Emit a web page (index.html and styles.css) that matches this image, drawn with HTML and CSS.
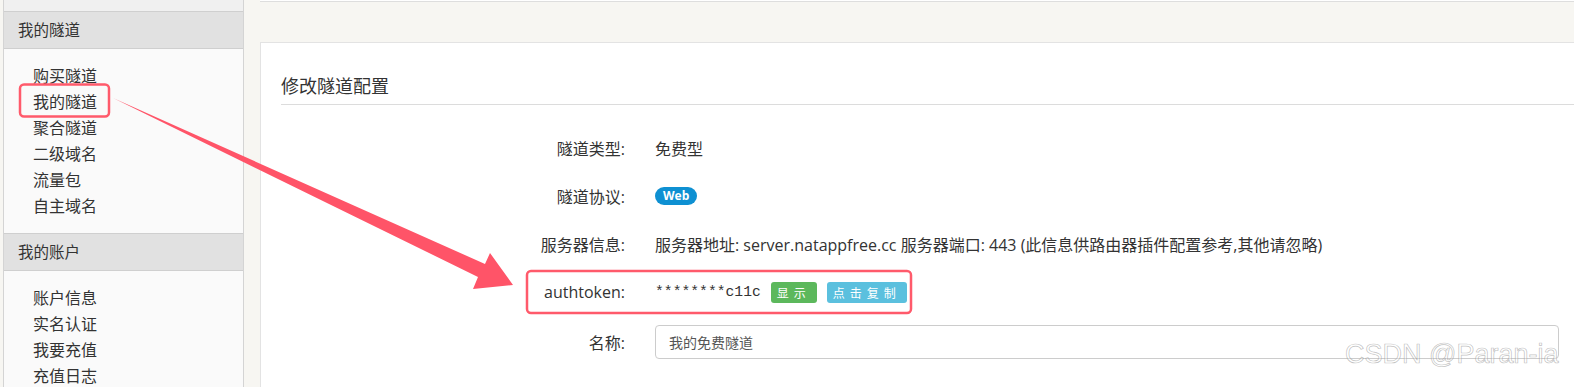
FILE: index.html
```html
<!DOCTYPE html>
<html lang="zh-CN">
<head>
    <meta charset="UTF-8">
    <title>修改隧道配置</title>
    <link rel="stylesheet" href="styles.css">
</head>
<body>
    <div class="page">
        <div class="sidebar">
            <div class="nav-tail"></div>
            <div class="nav-head">我的隧道</div>
            <ul class="nav-list">
                <li>购买隧道</li>
                <li>我的隧道</li>
                <li>聚合隧道</li>
                <li>二级域名</li>
                <li>流量包</li>
                <li>自主域名</li>
            </ul>
            <div class="nav-head">我的账户</div>
            <ul class="nav-list">
                <li>账户信息</li>
                <li>实名认证</li>
                <li>我要充值</li>
                <li>充值日志</li>
            </ul>
        </div>

        <div class="main">
            <div class="panel-prev"></div>
            <div class="panel">
                <h3 class="panel-title">修改隧道配置</h3>
                <div class="form">
                    <div class="form-row">
                        <label>隧道类型:</label>
                        <div class="value">免费型</div>
                    </div>
                    <div class="form-row">
                        <label>隧道协议:</label>
                        <div class="value"><span class="badge">Web</span></div>
                    </div>
                    <div class="form-row">
                        <label>服务器信息:</label>
                        <div class="value">服务器地址: server.natappfree.cc 服务器端口: 443 (此信息供路由器插件配置参考,其他请忽略)</div>
                    </div>
                    <div class="form-row">
                        <label>authtoken:</label>
                        <div class="value">
                            <span class="token">********c11c</span>
                            <button class="btn btn-show">显示</button>
                            <button class="btn btn-copy">点击复制</button>
                        </div>
                    </div>
                    <div class="form-row form-row-input">
                        <label>名称:</label>
                        <div class="value"><input type="text" value="我的免费隧道"></div>
                    </div>
                </div>
            </div>
        </div>
    </div>

    <!-- annotation layer -->
    <svg class="marks" width="1574" height="387" viewBox="0 0 1574 387">
        <rect x="20" y="84.5" width="89" height="32" rx="4" ry="4" fill="none" stroke="#ff5a6b" stroke-width="2.5"/>
        <rect x="527" y="271" width="384" height="42" rx="4" ry="4" fill="none" stroke="#ff5a6b" stroke-width="2.5"/>
        <polygon points="113,98 485,264 490,253 513,285 473,289 478,277" fill="#ff5468"/>
    </svg>

    <div class="watermark">CSDN @Paran-ia</div>
</body>
</html>
```

FILE: styles.css
```css
/* natapp console - tunnel settings */
body {
    margin: 0;
    height: 387px;
    overflow: hidden;
    background-color: #f7f6f2;
    font-family: "Open Sans", "Noto Sans CJK SC", sans-serif;
    font-size: 16px;
    color: #333;
}

.page {
    display: flex;
    align-items: flex-start;
}

/* left menu */
.sidebar {
    box-sizing: border-box;
    width: 241px;
    margin-left: 3px;
    border-left: 1px solid #d4d4d4;
    border-right: 1px solid #d4d4d4;
    background-color: #fafafa;
    min-height: 387px;
}

.nav-tail {
    height: 11px;
    background-color: #f0f0f0;
}

.nav-head {
    height: 36px;
    line-height: 36px;
    padding-left: 14px;
    background-color: #e1e1e1;
    border-top: 1px solid #cfcfcf;
    border-bottom: 1px solid #cfcfcf;
    font-size: 15.5px;
}

.nav-list {
    list-style: none;
    margin: 0;
    padding: 14px 0 14px 29px;
}

.nav-list li {
    height: 26px;
    line-height: 26px;
}

/* right side */
.main {
    flex: 1;
    margin-left: 16px;
}

.panel-prev {
    height: 1px;
    background: #fff;
    border-bottom: 1px solid #dedede;
    margin-bottom: 40px;
}

.panel {
    background: #fff;
    border: 1px solid #e3e3e3;
    border-right: none;
    padding-top: 30px;
    padding-left: 20px;
    min-height: 400px;
}

.panel-title {
    margin: 0;
    font-size: 18px;
    font-weight: normal;
    line-height: 26px;
    padding-bottom: 5px;
    border-bottom: 1px solid #dcdcdc;
}

.form {
    margin-top: 19px;
    padding-right: 15px;
}

.form-row {
    display: grid;
    grid-template-columns: 344px 1fr;
    column-gap: 30px;
    align-items: center;
    height: 48px;
}

.form-row label {
    text-align: right;
}

.form-row-input {
    height: 52px;
}

.value {
    display: flex;
    align-items: center;
    white-space: nowrap;
}

.badge {
    display: inline-block;
    height: 18px;
    line-height: 18px;
    padding: 0 8px;
    border-radius: 9px;
    background-color: #0e90d2;
    color: #fff;
    font-size: 12px;
    font-weight: bold;
}

.token {
    font-family: "Liberation Mono", monospace;
    font-size: 14.7px;
    margin-right: 10px;
}

.btn {
    height: 21px;
    padding: 0 6px;
    border: none;
    border-radius: 3px;
    color: #fff;
    font-family: "Noto Sans CJK SC", sans-serif;
    font-size: 12px;
    letter-spacing: 5px;
    line-height: 21px;
    margin-right: 10px;
}

.btn-show {
    background-color: #5cb85c;
}

.btn-copy {
    background-color: #5bc0de;
}

input {
    box-sizing: border-box;
    width: 100%;
    height: 34px;
    padding: 0 13px;
    border: 1px solid #cccccc;
    border-radius: 4px;
    font-family: "Noto Sans CJK SC", sans-serif;
    font-size: 14px;
    color: #555;
}

/* overlays */
.marks {
    position: absolute;
    left: 0;
    top: 0;
    pointer-events: none;
}

.watermark {
    position: absolute;
    left: 1345px;
    top: 339px;
    font-family: "Liberation Sans", Arial, sans-serif;
    font-size: 27px;
    color: rgba(255, 255, 255, 0.35);
    -webkit-text-stroke: 0.7px rgba(140, 140, 140, 0.55);
}
```
